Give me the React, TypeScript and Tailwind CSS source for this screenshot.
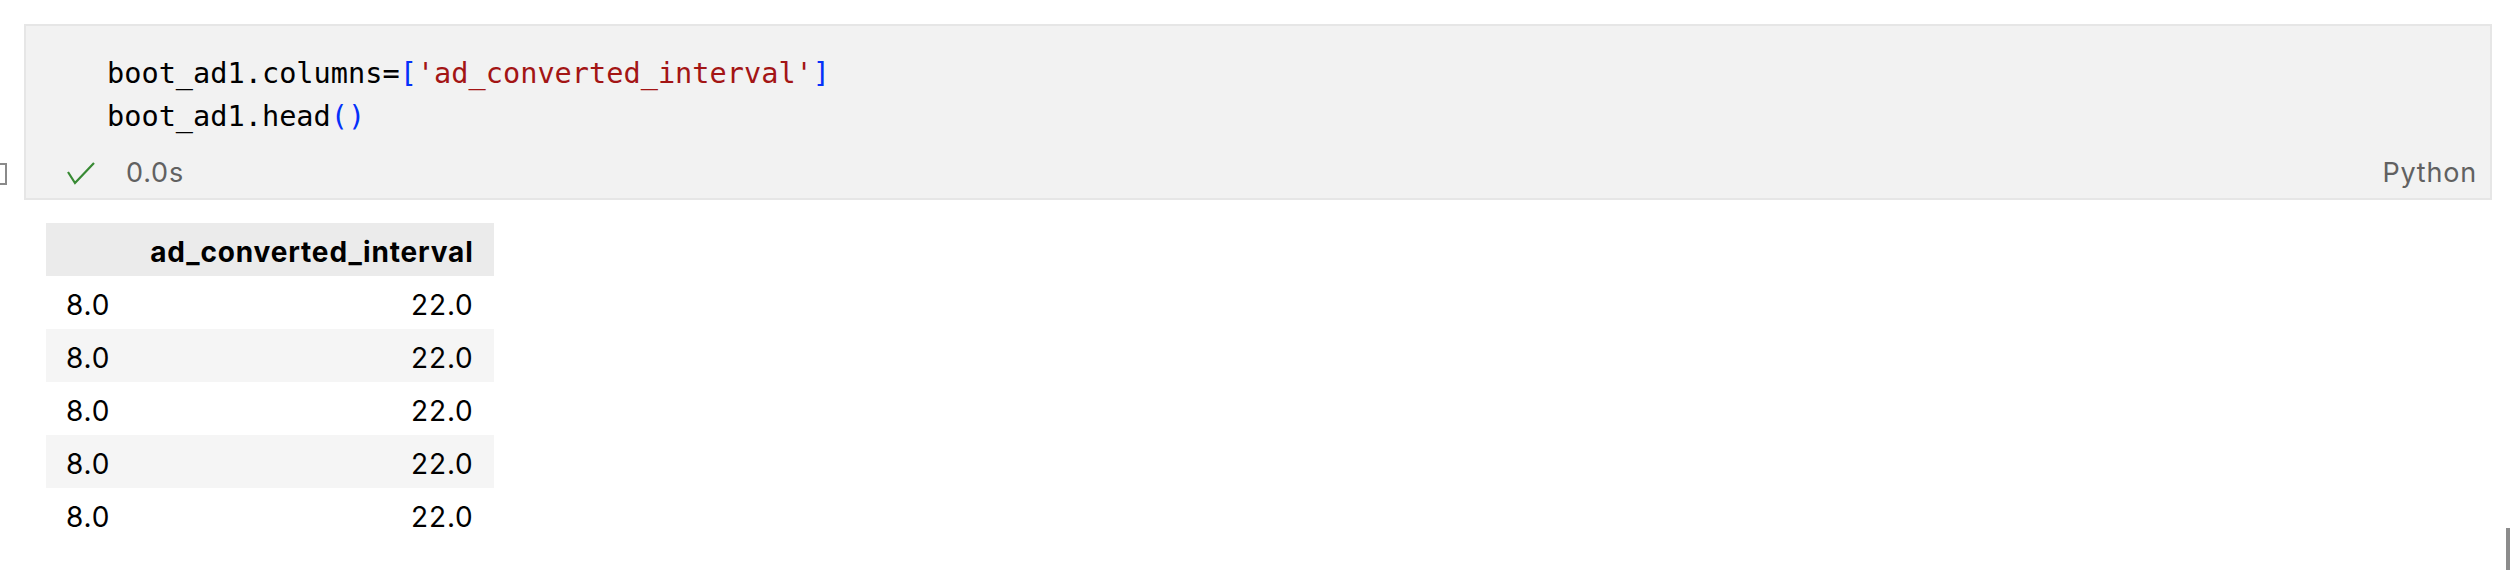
import React from "react";

const rows = [
  ["8.0", "22.0"],
  ["8.0", "22.0"],
  ["8.0", "22.0"],
  ["8.0", "22.0"],
  ["8.0", "22.0"],
];

const sans = "font-['Inter','Noto_Sans',sans-serif]";

export default function App() {
  return (
    <div className="w-[2510px] h-[570px] bg-white overflow-hidden flex flex-col">
      {/* notebook cell */}
      <div className="flex pt-6">
        <div className="w-6 shrink-0 flex flex-col">
          <div className="mt-[139px] -ml-[15px] w-[22px] h-[22px] border-2 border-[#8a8a8a]" />
        </div>
        <div className="flex-1 mr-[18px] border-2 border-[#e6e6e6] bg-[#f2f2f2] flex flex-col">
          <div className="pt-[26px] pl-[81px] font-['DejaVu_Sans_Mono',monospace] text-[28.6px] leading-[43px] text-black">
            <div className="whitespace-pre">
              boot_ad1.columns=<span className="text-[#0431fa]">[</span>
              <span className="text-[#a31515]">'ad_converted_interval'</span>
              <span className="text-[#0431fa]">]</span>
            </div>
            <div className="whitespace-pre">
              boot_ad1.head<span className="text-[#0431fa]">()</span>
            </div>
          </div>
          <div className={`mt-[13px] mb-[3px] h-[44px] flex items-center justify-between pl-[41px] pr-[13px] text-[27px] tracking-[0.03em] text-[#616161] ${sans}`}>
            <div className="flex items-center">
              <svg width="28" height="24" viewBox="0 0 28 24" className="mt-[1px]">
                <polyline points="1,10 8,21 27,1" fill="none" stroke="#388a34" strokeWidth="2.2" />
              </svg>
              <span className="ml-[31px]">0.0s</span>
            </div>
            <span>Python</span>
          </div>
        </div>
      </div>

      {/* output table */}
      <div className="flex-1 flex">
        <table className={`mt-[23px] ml-[46px] self-start border-collapse text-[28px] tracking-[0.03em] text-black ${sans}`}>
          <thead>
            <tr className="bg-[#ebebeb] h-[53px]">
              <th className="px-5 pt-[5px]" />
              <th className="px-5 pt-[5px] text-right font-bold">ad_converted_interval</th>
            </tr>
          </thead>
          <tbody>
            {rows.map((r, i) => (
              <tr key={i} className={`h-[53px] ${i % 2 === 1 ? "bg-[#f5f5f5]" : "bg-white"}`}>
                <td className="px-5 pt-[5px] text-left">{r[0]}</td>
                <td className="px-5 pt-[5px] text-right">{r[1]}</td>
              </tr>
            ))}
          </tbody>
        </table>
        <div className="flex-1" />
        <div className="self-end w-1 h-[42px] bg-[#8c8c8c]" />
      </div>
    </div>
  );
}
